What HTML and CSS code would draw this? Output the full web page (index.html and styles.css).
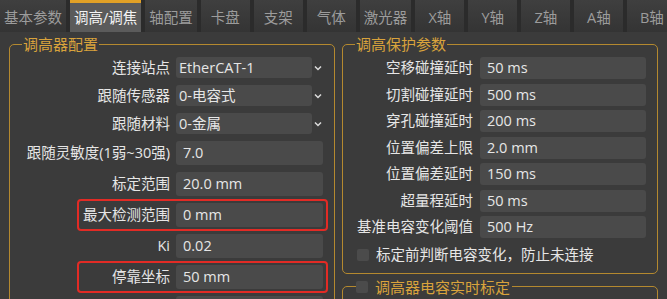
FILE: index.html
```html
<!DOCTYPE html>
<html>

<head>
    <meta charset="utf-8" />
    <title>调高/调焦</title>
    <link rel="stylesheet" href="styles.css">
</head>

<body>
    <ul class="tabs">
        <li>基本参数</li>
        <li class="active">调高/调焦</li>
        <li>轴配置</li>
        <li>卡盘</li>
        <li>支架</li>
        <li>气体</li>
        <li>激光器</li>
        <li>X轴</li>
        <li>Y轴</li>
        <li>Z轴</li>
        <li>A轴</li>
        <li>B轴</li>
    </ul>

    <div class="content">
        <fieldset class="group group_config">
            <legend>调高器配置</legend>
            <div class="rows">
                <div class="row">
                    <label>连接站点</label>
                    <div class="combo"><span class="combo_val">EtherCAT-1</span><svg class="arrow" width="8" height="6" viewBox="0 0 8 6"><polyline points="1,1.5 4,4.5 7,1.5" /></svg></div>
                </div>
                <div class="row">
                    <label>跟随传感器</label>
                    <div class="combo"><span class="combo_val">0-电容式</span><svg class="arrow" width="8" height="6" viewBox="0 0 8 6"><polyline points="1,1.5 4,4.5 7,1.5" /></svg></div>
                </div>
                <div class="row">
                    <label>跟随材料</label>
                    <div class="combo"><span class="combo_val">0-金属</span><svg class="arrow" width="8" height="6" viewBox="0 0 8 6"><polyline points="1,1.5 4,4.5 7,1.5" /></svg></div>
                </div>
                <div class="row">
                    <label>跟随灵敏度(1弱~30强)</label>
                    <div class="edit">7.0</div>
                </div>
                <div class="row">
                    <label>标定范围</label>
                    <div class="edit">20.0 mm</div>
                </div>
                <div class="row marked">
                    <label>最大检测范围</label>
                    <div class="edit">0 mm</div>
                </div>
                <div class="row">
                    <label>Ki</label>
                    <div class="edit">0.02</div>
                </div>
                <div class="row marked">
                    <label>停靠坐标</label>
                    <div class="edit">50 mm</div>
                </div>
                <div class="row">
                    <label></label>
                    <div class="edit"></div>
                </div>
            </div>
        </fieldset>

        <div class="column_right">
            <fieldset class="group group_protect">
                <legend>调高保护参数</legend>
                <div class="rows">
                    <div class="row">
                        <label>空移碰撞延时</label>
                        <div class="edit">50 ms</div>
                    </div>
                    <div class="row">
                        <label>切割碰撞延时</label>
                        <div class="edit">500 ms</div>
                    </div>
                    <div class="row">
                        <label>穿孔碰撞延时</label>
                        <div class="edit">200 ms</div>
                    </div>
                    <div class="row">
                        <label>位置偏差上限</label>
                        <div class="edit">2.0 mm</div>
                    </div>
                    <div class="row">
                        <label>位置偏差延时</label>
                        <div class="edit">150 ms</div>
                    </div>
                    <div class="row">
                        <label>超量程延时</label>
                        <div class="edit">50 ms</div>
                    </div>
                    <div class="row">
                        <label>基准电容变化阈值</label>
                        <div class="edit">500 Hz</div>
                    </div>
                    <div class="check_row">
                        <span class="check"></span>标定前判断电容变化，防止未连接
                    </div>
                </div>
            </fieldset>

            <fieldset class="group group_realtime">
                <legend><span class="check"></span>调高器电容实时标定</legend>
            </fieldset>
        </div>
    </div>
</body>

</html>
```

FILE: styles.css
```css
/* reset */

* {
    margin: 0;
    padding: 0;
    box-sizing: border-box;
}

html,
body {
    height: 100%;
    overflow: hidden;
}

body {
    background: #3b3b3b;
    color: #e6e6e6;
    font-family: "Open Sans", "Noto Sans CJK SC", sans-serif;
    font-size: 14.5px;
    line-height: 1.2;
}

/* tab bar */

.tabs {
    display: flex;
    gap: 4px;
    height: 32px;
    background: #2b2b2b;
    list-style: none;
    white-space: nowrap;
}

.tabs li {
    flex: none;
    min-width: 49px;
    padding: 3px 4px 0;
    line-height: 29px;
    text-align: center;
    color: #9c9c9c;
    background: linear-gradient(#3f3f3f 0%, #343434 100%);
}

.tabs li.active {
    padding-top: 0;
    border-top: 3px solid #e2a126;
    background: #5b5b5b;
    color: #f4f4f4;
}

/* content */

.content {
    display: flex;
    align-items: flex-start;
    gap: 7px;
    padding: 2px 9px 0;
}

.group {
    border: 1px solid #b4892f;
    border-radius: 5px;
    min-width: 0;
}

.group legend {
    margin-left: 12px;
    padding: 0 1px;
    font-size: 15px;
    line-height: 20px;
    color: #d9a33c;
}

.group_config {
    flex: none;
    width: 326px;
    height: 300px;
    padding: 3px 11px 0 0;
}

.column_right {
    flex: 1;
    display: flex;
    flex-direction: column;
    gap: 3px;
}

.group_protect {
    padding: 3px 11px 8px 0;
}

.group_realtime {
    height: 60px;
}

.group_realtime legend {
    display: flex;
    align-items: center;
    margin-left: 13px;
    padding: 0 2px 0 0;
}

.rows {
    display: flex;
    flex-direction: column;
    gap: 7px;
}

.group_protect .rows {
    gap: 4.5px;
}

.row {
    position: relative;
    display: flex;
    align-items: center;
    gap: 6px;
}

.row label {
    flex: none;
    width: 160px;
    text-align: right;
    white-space: nowrap;
}

.group_protect .row {
    gap: 7px;
}

.group_protect .row label {
    width: 130px;
}

/* inputs */

.edit,
.combo_val {
    flex: 1;
    background: #4a4a4a;
    border-radius: 3px;
    white-space: nowrap;
}

.edit {
    height: 24px;
    line-height: 24px;
    padding-left: 7px;
}

.group_protect .edit {
    height: 22px;
    line-height: 22px;
}

.combo {
    flex: 1;
    display: flex;
    align-items: center;
}

.combo_val {
    height: 21px;
    line-height: 21px;
    padding-left: 3px;
}

.arrow {
    flex: none;
    margin: 0 1px 0 2px;
}

.arrow polyline {
    fill: none;
    stroke: #dcdcdc;
    stroke-width: 1.5;
}

/* highlight */

.row.marked::after {
    content: "";
    position: absolute;
    left: 67px;
    right: -5px;
    top: -4px;
    bottom: -4px;
    border: 2px solid #e22b25;
    border-radius: 4px;
}

/* checkbox */

.check {
    flex: none;
    display: inline-block;
    width: 12px;
    height: 12px;
    margin-right: 7px;
    background: #4b4b4b;
    border-radius: 2px;
}

.check_row {
    display: flex;
    align-items: center;
    height: 20px;
    margin-top: 2px;
    padding-left: 14px;
}
```
